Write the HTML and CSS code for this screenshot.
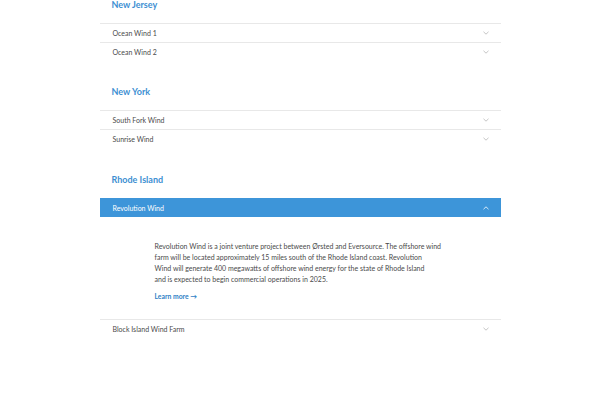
FILE: index.html
```html
<!DOCTYPE html>
<html lang="en">
<head>
    <meta charset="UTF-8">
    <meta name="viewport" content="width=device-width, initial-scale=1.0">
    <title>Offshore wind projects</title>
    <link rel="stylesheet" href="styles.css">
</head>
<body>
    <div class="projects">
        <section class="state-group">
            <h2>New Jersey</h2>
            <div class="project-row">
                <span>Ocean Wind 1</span>
                <svg class="chevron" viewBox="0 0 6 4"><polyline points="0.5,0.8 3,3.2 5.5,0.8"/></svg>
            </div>
            <div class="project-row">
                <span>Ocean Wind 2</span>
                <svg class="chevron" viewBox="0 0 6 4"><polyline points="0.5,0.8 3,3.2 5.5,0.8"/></svg>
            </div>
        </section>

        <section class="state-group">
            <h2>New York</h2>
            <div class="project-row">
                <span>South Fork Wind</span>
                <svg class="chevron" viewBox="0 0 6 4"><polyline points="0.5,0.8 3,3.2 5.5,0.8"/></svg>
            </div>
            <div class="project-row">
                <span>Sunrise Wind</span>
                <svg class="chevron" viewBox="0 0 6 4"><polyline points="0.5,0.8 3,3.2 5.5,0.8"/></svg>
            </div>
        </section>

        <section class="state-group">
            <h2>Rhode Island</h2>
            <div class="project-row is-open">
                <span>Revolution Wind</span>
                <svg class="chevron" viewBox="0 0 6 4"><polyline points="0.5,3.2 3,0.8 5.5,3.2"/></svg>
            </div>
            <div class="project-panel">
                <p>Revolution Wind is a joint venture project between Ørsted and Eversource. The offshore wind<br>
                farm will be located approximately 15 miles south of the Rhode Island coast. Revolution<br>
                Wind will generate 400 megawatts of offshore wind energy for the state of Rhode Island<br>
                and is expected to begin commercial operations in 2025.</p>
                <a href="#" class="learn-more">Learn more &rarr;</a>
            </div>
            <div class="project-row">
                <span>Block Island Wind Farm</span>
                <svg class="chevron" viewBox="0 0 6 4"><polyline points="0.5,0.8 3,3.2 5.5,0.8"/></svg>
            </div>
        </section>
    </div>
</body>
</html>
```

FILE: styles.css
```css
* {
    margin: 0;
    padding: 0;
    box-sizing: border-box;
}

body {
    font-family: 'Lato', 'Noto Sans', sans-serif;
    background: #ffffff;
    color: #4a4a4a;
    height: 394px;
    overflow: hidden;
}

.projects {
    width: 401px;
    margin: -26px auto 0;
}

.state-group {
    padding-top: 24px;
}

.state-group:last-child {
    padding-top: 25px;
}

.state-group h2 {
    font-size: 9px;
    line-height: 14px;
    font-weight: 700;
    color: #3d8fd2;
    padding-left: 12px;
    margin-bottom: 11px;
}

.project-row {
    display: flex;
    align-items: center;
    justify-content: space-between;
    height: 19px;
    padding: 0 12px 0 13px;
    border-top: 1px solid #e8e8e8;
    font-size: 7px;
    color: #4a4a4a;
}

.chevron {
    width: 6px;
    height: 4px;
    fill: none;
    stroke: #b5b5b5;
    stroke-width: 0.8;
}

.project-row.is-open {
    background: #3d95d9;
    border-top-color: #3d95d9;
    color: #ffffff;
}

.project-row.is-open .chevron {
    stroke: #ffffff;
}

.project-panel {
    padding: 24px 55px 17px;
}

.project-panel p {
    width: 310px;
    font-size: 7px;
    line-height: 11px;
    color: #4a4a4a;
}

.learn-more {
    display: block;
    width: fit-content;
    margin-top: 6px;
    font-size: 6.8px;
    line-height: 11px;
    font-weight: 700;
    color: #2f7fc6;
    text-decoration: none;
}
```
